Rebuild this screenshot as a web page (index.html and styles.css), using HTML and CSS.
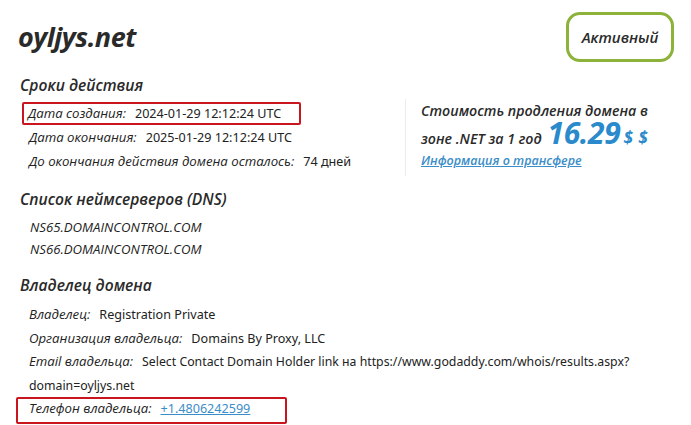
FILE: index.html
```html
<!DOCTYPE html>
<html lang="ru">
<head>
<meta charset="utf-8">
<title>oyljys.net</title>
<link rel="stylesheet" href="styles.css">
</head>
<body>
<div class="page">
  <header class="head">
    <h1 class="domain">oyljys.net</h1>
    <div class="status">Активный</div>
  </header>

  <section class="section s1">
    <h2 class="heading">Сроки действия</h2>
    <div class="terms">
      <div class="rows">
        <div class="row marked m1"><span class="label">Дата создания:</span><span class="value">2024-01-29 12:12:24 UTC</span></div>
        <div class="row"><span class="label">Дата окончания:</span><span class="value">2025-01-29 12:12:24 UTC</span></div>
        <div class="row"><span class="label">До окончания действия домена осталось:</span><span class="value">74 дней</span></div>
      </div>
      <div class="price">
        <div class="price-text l1">Стоимость продления домена в</div>
        <div class="price-text l2">зоне .NET за 1 год <span class="amount">16.29</span><span class="cur">$ $</span></div>
        <a class="transfer" href="#">Информация о трансфере</a>
      </div>
    </div>
  </section>

  <section class="section s2">
    <h2 class="heading">Список неймсерверов (DNS)</h2>
    <div class="ns">
      <div class="ns-item">NS65.DOMAINCONTROL.COM</div>
      <div class="ns-item">NS66.DOMAINCONTROL.COM</div>
    </div>
  </section>

  <section class="section s3">
    <h2 class="heading">Владелец домена</h2>
    <div class="rows">
      <div class="row"><span class="label">Владелец:</span><span class="value">Registration Private</span></div>
      <div class="row"><span class="label">Организация владельца:</span><span class="value">Domains By Proxy, LLC</span></div>
      <div class="row wrap"><span class="label">Email владельца:</span><span class="value narrow">Select Contact Domain Holder link на https://www.godaddy.com/whois/results.aspx?<br>domain=oyljys.net</span></div>
      <div class="row marked m2"><span class="label">Телефон владельца:</span><a class="value link" href="#">+1.4806242599</a></div>
    </div>
  </section>
</div>
</body>
</html>
```

FILE: styles.css
```css
html, body {
  margin: 0;
  padding: 0;
  background: #ffffff;
}
body {
  font-family: "Noto Sans", "Open Sans", sans-serif;
  color: #222222;
}
.page {
  width: 691px;
  height: 425px;
  overflow: hidden;
  padding: 0 0 0 18px;
  box-sizing: border-box;
}
.head {
  display: flex;
  justify-content: space-between;
  align-items: flex-start;
  padding-right: 17px;
}
.domain {
  margin: 18px 0 0 0;
  font-family: "Open Sans", sans-serif;
  font-style: italic;
  font-weight: 700;
  font-size: 27px;
  line-height: 38px;
  color: #2a2a2a;
  letter-spacing: -0.5px;
}
.status {
  margin-top: 12px;
  width: 102px;
  height: 44px;
  border: 3px solid #8cb23a;
  border-radius: 14px;
  display: flex;
  align-items: center;
  justify-content: center;
  font-family: "Open Sans", sans-serif;
  font-style: italic;
  font-weight: 600;
  font-size: 15px;
  color: #2a2a2a;
}
.section {
  padding-left: 2px;
}
.heading {
  margin: 0;
  font-family: "Open Sans", sans-serif;
  font-style: italic;
  font-weight: 600;
  font-size: 15.6px;
  line-height: 24px;
  color: #2a2a2a;
}
.s1 .heading { margin-top: 11px; }
.s2 .heading { margin-top: 11px; }
.s3 .heading { margin-top: 13px; }
.terms {
  display: flex;
  align-items: flex-start;
  margin-top: 5px;
}
.rows {
  width: 376px;
  padding-left: 9px;
  display: flex;
  flex-direction: column;
  align-items: flex-start;
}
.s3 .rows { width: auto; margin-top: 6px; }
.row {
  font-size: 12.5px;
  line-height: 23.5px;
  white-space: nowrap;
}
.row.wrap { white-space: normal; }
.label {
  font-family: "Open Sans", sans-serif;
  font-style: italic;
  font-size: 13.2px;
  margin-right: 9px;
  color: #222;
}
.value {
  font-family: "Noto Sans", sans-serif;
  font-size: 12.6px;
  color: #222;
}
.value.narrow {
  font-size: 12.3px;
}
.link {
  color: #3b8dc7;
  text-decoration: underline;
}
.marked {
  border: 2.5px solid #c9151e;
  border-radius: 2px;
  line-height: 19px;
}
.m1 {
  margin-left: -7px;
  padding: 0 18px 0 4px;
  margin-bottom: 1px;
}
.m2 {
  margin-left: -13px;
  padding: 0 35px 4px 11px;
}
.price {
  border-left: 1px solid #ececec;
  margin-top: -3px;
  padding: 0 0 4px 15px;
  font-family: "Open Sans", sans-serif;
  font-style: italic;
}
.price-text {
  font-weight: 600;
  font-size: 14.2px;
  color: #2a2a2a;
  white-space: nowrap;
}
.l1 { height: 24px; line-height: 24px; }
.l2 { height: 25px; line-height: 25px; }
.amount {
  font-size: 30px;
  font-weight: 700;
  color: #2a8acb;
  line-height: 20px;
  margin-left: 2px;
  letter-spacing: -0.3px;
}
.cur {
  font-size: 17px;
  font-weight: 700;
  color: #2a8acb;
  margin-left: 3px;
  letter-spacing: 0.5px;
}
.transfer {
  display: inline-block;
  font-size: 12.5px;
  font-weight: 600;
  color: #3b8dc7;
  text-decoration: underline;
  line-height: 22px;
}
.ns {
  padding-left: 10px;
  margin-top: 5px;
}
.ns-item {
  font-family: "Open Sans", sans-serif;
  font-style: italic;
  font-size: 13.2px;
  line-height: 22px;
  color: #222;
}
```
